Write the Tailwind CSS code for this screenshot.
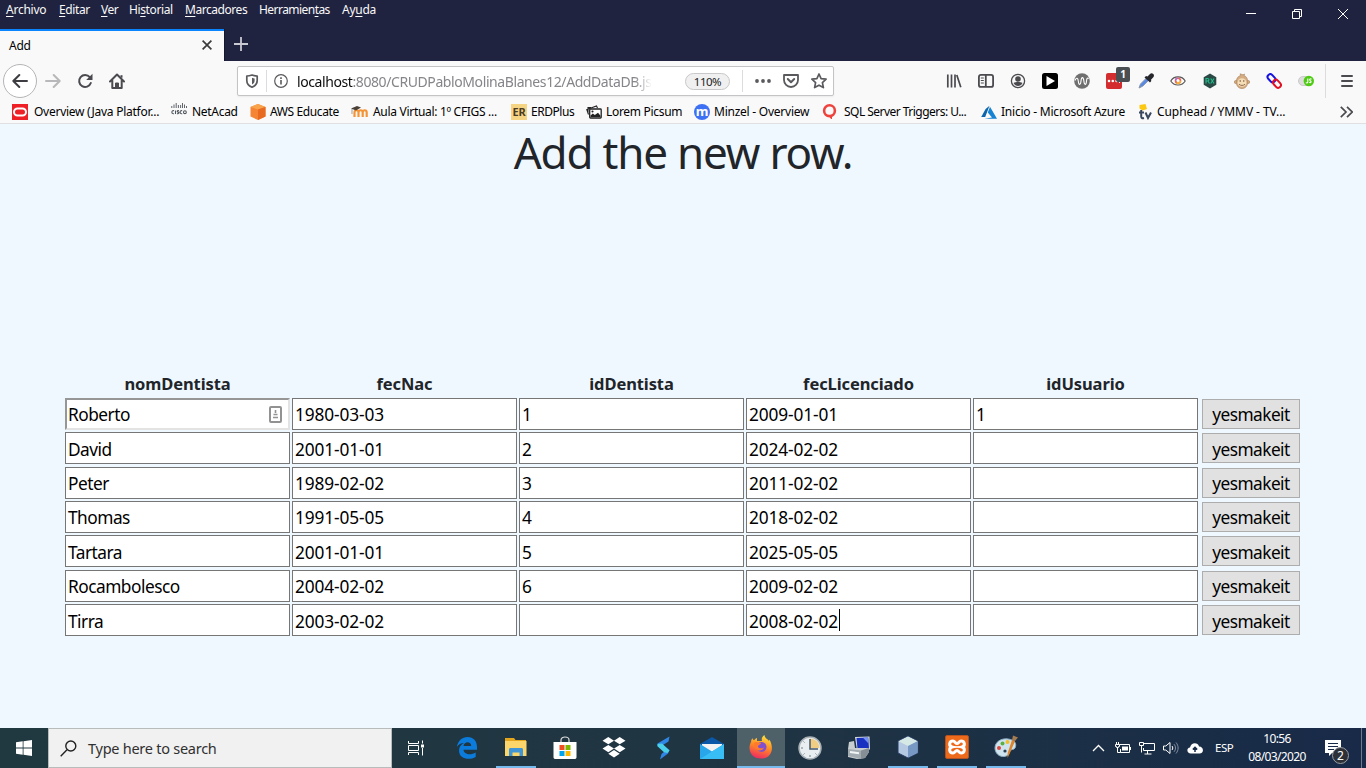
<!DOCTYPE html>
<html lang="es">
<head>
<meta charset="utf-8">
<title>Add</title>
<script src="https://cdn.jsdelivr.net/npm/@tailwindcss/browser@4"></script>
</head>
<body class="w-[1366px] h-[768px] overflow-hidden flex flex-col bg-[#f0f8ff] font-['Noto_Sans','Open_Sans',sans-serif] text-black">

<!-- Title bar -->
<header class="h-[61px] shrink-0 bg-[#20233f] flex justify-between">
  <div class="flex flex-col">
    <nav class="h-[29px] pl-[6px] flex gap-3 text-[12px] leading-[20px] tracking-[-0.25px] text-[#f9f9fa] whitespace-nowrap [&_u]:underline-offset-2">
      <span class="w-[41px]"><u>A</u>rchivo</span><span class="w-[30px] tracking-[-0.4px]"><u>E</u>ditar</span><span class="w-[16px] tracking-[-0.5px]"><u>V</u>er</span><span class="w-[44px] tracking-[-0.38px]">Hi<u>s</u>torial</span><span class="w-[62px] tracking-[-0.45px]"><u>M</u>arcadores</span><span class="w-[71px] tracking-[-0.55px]">Herramien<u>t</u>as</span><span>Ay<u>u</u>da</span>
    </nav>
    <div class="flex h-8">
      <div class="w-[224px] bg-[#f9f9fa] border-t-2 border-[#0a84ff] flex items-center justify-between pl-[9px] pr-[12px] text-[12px] tracking-[-0.25px]">
        <span>Add</span>
        <svg class="size-[10px] -mt-0.5" viewBox="0 0 10 10" stroke="#3c3c3d" stroke-width="1.7" fill="none"><path d="M.6.6l8.800 8.800M9.400.6L.6 9.400"/></svg>
      </div>
      <div class="pl-[8px] border-l border-[#15172c] flex items-center"><svg class="size-4 -mt-0.5" viewBox="0 0 16 16" stroke="#c9c9d4" stroke-width="1.8"><path d="M1 8h14M8 1v14"/></svg></div>
    </div>
  </div>
  <div class="flex gap-[34px] pt-[8px] pr-[17px]">
    <svg class="size-3" viewBox="0 0 12 12" stroke="#fff"><path d="M1 5.500h10"/></svg>
    <svg class="size-3" viewBox="0 0 12 12" stroke="#fff" fill="none"><path d="M1.500 3.500h7v7h-7zM3.500 3.500v-2h7v7h-2"/></svg>
    <svg class="size-3" viewBox="0 0 12 12" stroke="#fff"><path d="M1 1l10 10M11 1L1 11"/></svg>
  </div>
</header>

<!-- Navigation toolbar -->
<div class="h-10 shrink-0 bg-[#f9f9fa] flex items-center pl-[3px] text-[#4a4a4f]">
  <div class="size-[34px] rounded-full border border-[#b5b5b8] bg-white flex items-center justify-center"><svg class="size-4" viewBox="0 0 16 16" fill="none" stroke="#3e3e42" stroke-width="2" stroke-linecap="round" stroke-linejoin="round"><path d="M15 8H1.300M7.300 2L1.300 8l6 6"/></svg></div>
  <svg class="size-4 ml-2" viewBox="0 0 16 16" fill="none" stroke="#b8b8ba" stroke-width="2" stroke-linecap="round" stroke-linejoin="round"><path d="M1 8h13.700M8.700 2l6 6-6 6"/></svg>
  <svg class="size-4 ml-4" viewBox="0 0 16 16" fill="none" stroke="#4a4a4f" stroke-width="2"><path d="M12.800 4.200A6 6 0 1 0 13.800 10" stroke-linecap="round"/><path d="M15.500 .8v6.200H9.200z" fill="#4a4a4f" stroke="none"/></svg>
  <svg class="size-4 ml-4" viewBox="0 0 16 16" fill="none" stroke="#4a4a4f" stroke-width="2" stroke-linejoin="round" stroke-linecap="round"><path d="M1 8.500L8 1.500l7 7M3.300 7.500V15h9.400V7.500"/><path d="M6.500 15v-5h3v5z" fill="#4a4a4f" stroke-width="1"/><path d="M12.500 2.200v2.500" stroke-linecap="butt"/></svg>

  <div class="ml-[112px] w-[597px] h-[30px] border border-[#c4c4c6] rounded-[2px] bg-white flex items-center shadow-[0_1px_2px_rgba(0,0,0,.06)]">
    <svg class="size-[14px] ml-[7px]" viewBox="0 0 14 14" fill="none" stroke="#5a5a5e" stroke-width="1.700"><path d="M7 1C5 1.700 3.500 2 1.800 2v4.500C1.800 10 4 12 7 13.200c3-1.200 5.200-3.200 5.200-6.700V2C10.500 2 9 1.700 7 1z" stroke-linejoin="round"/><path d="M7 3.800c1 .4 1.800.5 2.600.6v2.200C9.600 8.700 8.600 9.700 7 10.500z" fill="#5a5a5e" stroke="none"/></svg>
    <div class="w-px h-[22px] bg-[#dcdcde] ml-[7px]"></div>
    <svg class="size-[14px] ml-[7px]" viewBox="0 0 14 14" fill="none" stroke="#5a5a5e"><circle cx="7" cy="7" r="6.300" stroke-width="1.200"/><path d="M7 6v4.500M7 3.300v1.600" stroke-width="1.600"/></svg>
    <div class="ml-[9px] mt-px w-[355px] overflow-hidden whitespace-nowrap text-[14px] tracking-[-0.41px] text-[#85858a] [mask-image:linear-gradient(to_right,#000_95%,transparent)]"><span class="text-[#0c0c0d]">localhost</span>:8080/CRUDPabloMolinaBlanes12/AddDataDB.jsp</div>
    <div class="ml-[33px] w-[45px] h-[17px] rounded-full border border-[#c8c8ca] bg-[#f0f0f1] text-[11.500px] leading-[15px] text-center tracking-[-0.5px] text-[#222]">110%</div>
    <div class="w-px h-[22px] bg-[#dcdcde] ml-[12px]"></div>
    <svg class="w-4 h-1 ml-3" viewBox="0 0 16 4" fill="#5a5a5e"><circle cx="2" cy="2" r="1.900"/><circle cx="8" cy="2" r="1.900"/><circle cx="14" cy="2" r="1.900"/></svg>
    <svg class="size-4 ml-[12px]" viewBox="0 0 16 16" fill="none" stroke="#5a5a5e" stroke-width="1.800" stroke-linecap="round" stroke-linejoin="round"><path d="M1 2h14v5a7 7 0 0 1-14 0z"/><path d="M4.800 6L8 9.200 11.200 6" stroke-width="2"/></svg>
    <svg class="size-4 ml-[12px]" viewBox="0 0 16 16" fill="none" stroke="#5a5a5e" stroke-width="1.700" stroke-linejoin="round"><path d="M8 1l2.100 4.600 5 .6-3.700 3.400 1 5L8 12.200l-4.400 2.400 1-5L.9 6.200l5-.6z"/></svg>
  </div>

  <div class="ml-[112px] flex gap-4 items-center">
    <svg class="size-4" viewBox="0 0 16 16" stroke="#4a4a4f" stroke-width="1.700"><path d="M1.800 1.500v13M5.500 1.500v13M9 1.500v13M10.800 2l4 12.300"/></svg>
    <svg class="size-4" viewBox="0 0 16 16" fill="none" stroke="#4a4a4f" stroke-width="1.800"><rect x=".9" y="1.900" width="14.200" height="12" rx="2"/><path d="M7.800 2v12"/><path d="M2.800 5h3M2.800 7.500h3M2.800 10h3" stroke-width="1"/></svg>
    <svg class="size-4" viewBox="0 0 16 16"><circle cx="8" cy="8" r="6.600" fill="none" stroke="#4a4a4f" stroke-width="1.300"/><circle cx="8" cy="6" r="2.800" fill="#4a4a4f"/><path d="M3.500 10c2.300-1.200 6.700-1.200 9 0-1 2-2.600 3-4.500 3s-3.500-1-4.500-3z" fill="#4a4a4f"/></svg>
    <svg class="size-4" viewBox="0 0 16 16"><rect width="16" height="16" rx="2.500"/><path d="M4.500 3l8.500 5-8.500 5z" fill="#fff"/></svg>
    <svg class="size-4" viewBox="0 0 16 16"><circle cx="8" cy="8" r="7.800" fill="#6f6f70"/><path d="M1 7.500c1.300-3.500 3-2.500 3.300.5.400 4.500 2.200 4.500 2.700 0 .4-4.500 2.400-4.500 2.900 0 .4 4.500 2.300 4.500 2.600 0 .2-2.500 1-3.500 2.200-2.500" fill="none" stroke="#fff" stroke-width="1.100"/></svg>
    <div class="relative size-4"><svg viewBox="0 0 16 16"><rect width="16" height="16" rx="2" fill="#d32d2f"/><g fill="#fff"><circle cx="3" cy="8" r="1.300"/><circle cx="6.800" cy="8" r="1.300"/><circle cx="10.600" cy="8" r="1.300"/><path d="M13 6h1v4h-1z"/></g></svg><div class="absolute left-[10px] -top-[6px] w-[14px] h-[15px] rounded-[2px] bg-[#4a4f54] text-white text-[10px] leading-[15px] font-bold text-center">1</div></div>
    <svg class="size-4" viewBox="0 0 16 16"><path d="M1 15l1.500-4 6-6 2.200 2.200-6 6z" fill="#5588e8" stroke="#8a96a6" stroke-width="1"/><path d="M6.500 4.500L8 3l1.500.5L12 1c1-1 2.300-.8 3.300 0s.8 2.300 0 3.300L13 6.800 13.300 8 12 9.500z" fill="#25272c"/></svg>
    <svg class="size-4" viewBox="0 0 16 16"><path d="M.8 8c3-5.500 11.400-5.500 14.400 0-3 5.300-11.400 5.300-14.400 0z" fill="#fff" stroke="#555" stroke-width="1.100"/><circle cx="8" cy="7.800" r="3.300" fill="#e9665a"/><path d="M8 7.800V4.500a3.300 3.300 0 0 0-3.200 3z" fill="#b36cc5"/><path d="M8 7.800h3.300A3.300 3.300 0 0 1 6 10.600z" fill="#f3b13e"/><circle cx="8" cy="7.600" r="1.500" fill="#fff"/></svg>
    <svg class="size-4" viewBox="0 0 16 16"><path d="M8 .5l6.300 3.700v7.600L8 15.500l-6.300-3.700V4.200z" fill="#2b4a45"/><path d="M4 10.500v-5h1.500c2 0 2 2.500 0 2.500H4m2 0l1.500 2.500M8.700 5.500l3.300 5m0-5l-3.300 5" stroke="#21bd8b" fill="none" stroke-width="1.100"/></svg>
    <svg class="size-4" viewBox="0 0 16 16"><g fill="#d5ad83" stroke="#aa8057" stroke-width=".6"><circle cx="1.900" cy="9" r="1.600"/><circle cx="14.100" cy="9" r="1.600"/><path d="M2.300 9c0-4 2-6 4.500-6.500L6 .8l3 1 1.500-.8-.3 1.700c2.300.7 3.600 3 3.500 6.300 0 4-2.300 6.500-5.700 6.500S2.300 13 2.300 9z"/></g><ellipse cx="8" cy="9.500" rx="4.400" ry="4.300" fill="#f5ddb8"/><path d="M6.200 7v2M9.800 7v2M5 11.300c2 1.500 4 1.500 6 0" stroke="#8f6c4c" fill="none"/></svg>
    <svg class="size-4" viewBox="0 0 16 16" fill="none" stroke-width="2"><rect x="1" y="2.500" width="9" height="5.500" rx="2.750" transform="rotate(48 5.500 5.200)" stroke="#1512e2"/><rect x="6.500" y="8" width="9" height="5.500" rx="2.750" transform="rotate(48 11 10.700)" stroke="#e30f22"/></svg>
    <svg class="size-4" viewBox="0 0 16 16"><rect x=".5" y="3.500" width="14" height="9" rx="4.500" fill="#ddd" stroke="#bbb" stroke-width=".7"/><circle cx="10.800" cy="8" r="5.200" fill="#50cb14"/><path d="M9.800 5.500V9c0 1.200-1.500 1.200-1.800.3M13.500 6.200c-1.500-.9-2.700.6-1.200 1.500 1.600.9.500 2.500-1.100 1.500" fill="none" stroke="#fff" stroke-width="1.100"/></svg>
  </div>
  <div class="ml-[11px] w-px h-[34px] bg-[#dcdcde]"></div>
  <svg class="size-4 ml-[13px]" viewBox="0 0 16 16" stroke="#4a4a4f" stroke-width="2" stroke-linecap="round"><path d="M3 3h10M3 8h10M3 13h10"/></svg>
</div>

<!-- Bookmarks -->
<div class="h-[23px] shrink-0 bg-[#f9f9fa] border-b border-[#e0e0e2] flex items-center pl-3 pb-px text-[12px] tracking-[-0.3px] whitespace-nowrap">
  <div class="w-[159px] flex items-center gap-[6px]"><svg class="size-4" viewBox="0 0 16 16"><path d="M0 0h16v16H0z" fill="#ee2025"/><rect x="2" y="4.500" width="12" height="7" rx="3.500" fill="none" stroke="#fff" stroke-width="2"/></svg><span class="tracking-[-0.26px]">Overview (Java Platfor...</span></div>
  <div class="w-[79px] flex items-center gap-[5px]"><svg class="size-4 -mt-1" viewBox="0 0 16 16" fill="none" stroke="#4e555a"><path d="M.8 4v2M3 2.500V6M5.200 1v5M7.400 3v3M9.600 3v3M11.500 1v5M13.500 2.500V6M15.500 4v2" stroke-width=".9"/><path d="M3 8.700c-2.800-.8-2.800 3.800 0 3M4.500 8.500V12M8 8.800c-2-.6-2.200.8-1 1.300 1.600.5.800 2-1 1.500M11.200 8.700c-2.800-.8-2.800 3.800 0 3" stroke-width="1.100"/><circle cx="13.900" cy="10.200" r="1.400" stroke-width="1.100"/></svg><span>NetAcad</span></div>
  <div class="w-[101px] flex items-center gap-1"><svg class="size-4" viewBox="0 0 16 16"><path d="M8 0l7.500 3v9.500L8 16 .5 12.500V3z" fill="#f58534"/><path d="M8 5.500L.5 3 8 0l7.500 3z" fill="#f9a34b"/><path d="M8 5.500L15.500 3v9.500L8 16z" fill="#e86a20"/></svg><span class="tracking-[-0.38px]">AWS Educate</span></div>
  <div class="w-[160px] flex items-center gap-[5px]"><svg class="w-[17px] h-4" viewBox="0 0 17 16" fill="none"><path d="M3.500 13V8.500c0-3 4-3 4 0V13m0-4.500c0-3 4.200-3 4.200 0V13m0-4.500c0-3 4-3 4 0V13" stroke="#f59435" stroke-width="2.200"/><path d="M0 4.500L6 2l4 1.500-5 3z" fill="#4a4038"/><path d="M1 5v5" stroke="#777" stroke-width=".7"/></svg><span>Aula Virtual: 1º CFIGS ...</span></div>
  <div class="w-[75px] flex items-center gap-1"><span class="size-4 bg-[#f5d583] text-[#4b3b25] font-bold text-[11px] leading-4 tracking-[-0.3px] text-center">ER</span><span class="tracking-[-0.45px]">ERDPlus</span></div>
  <div class="w-[108px] flex items-center gap-1"><svg class="size-4" viewBox="0 0 16 16" fill="none" stroke="#222" stroke-width="1.100"><path d="M2.500 10.500L.8 5.500 10.500 2l1 2M2 10V3.500h3"/><rect x="3.700" y="5" width="11.500" height="9" rx=".8" fill="#fff" stroke-width="1.300"/><path d="M4.500 13V11.500l2.300-2 2 1.500L12 8.800l2.500 3V13z" fill="#222" stroke="none"/><circle cx="6.500" cy="7.500" r=".5"/></svg><span>Lorem Picsum</span></div>
  <div class="w-[128px] flex items-center gap-1"><span class="size-4 rounded-full bg-[#3e70f4] text-white font-bold text-[13px] leading-[14px] text-center tracking-[-0.3px]">m</span><span class="tracking-[-0.24px]">Minzel - Overview</span></div>
  <div class="w-[159px] flex items-center gap-[7px]"><svg class="size-[15px]" viewBox="0 0 15 15" fill="none" stroke="#ee433c"><circle cx="7.500" cy="6.700" r="5.400" stroke-width="2.600"/><path d="M7.500 12l2 3V11z" fill="#ee433c" stroke-width="1"/></svg><span class="tracking-[-0.53px]">SQL Server Triggers: U...</span></div>
  <div class="w-[157px] flex items-center gap-1"><svg class="size-4" viewBox="0 0 16 16"><path d="M8.500 1.700L4.600 5 .2 13h4z" fill="#0d65ac"/><path d="M9 2.800L6.800 8.600 11 13.500 3.500 14.700H16z" fill="#1683d3"/></svg><span class="tracking-[-0.22px]">Inicio - Microsoft Azure</span></div>
  <div class="w-[202px] flex items-center gap-[3px]"><svg class="size-4" viewBox="0 0 16 16" fill="none"><path d="M1.500 1l6-1 1.500 5-4.500 1.500-3-2z" fill="#fbc913"/><path d="M3.200 6v6.500c0 1.500 1 2 2.800 1.500M1 8.500h5M7.500 8.500L10 14l3-5.500" stroke="#39485f" stroke-width="2"/></svg><span class="tracking-[-0.08px]">Cuphead / YMMV - TV...</span></div>
  <svg class="w-[13px] h-3" viewBox="0 0 13 12" fill="none" stroke="#4a4a4f" stroke-width="1.700"><path d="M.8 .8L6 6 .8 11.200M7 .8L12.200 6 7 11.200"/></svg>
</div>

<!-- Page -->
<main class="grow flex flex-col items-center">
  <h1 class="text-[44px] leading-[53px] h-[250px] pt-[2px] tracking-[-1.2px] text-[#212529]">Add the new row.</h1>
  <div class="w-[1236px] text-[17.300px] leading-[30px]">
    <div class="flex gap-[2px] h-6 leading-[20px] font-bold text-[16.500px] text-center text-[#212529] [&>span]:w-[225px] tracking-[-0.1px]"><span>nomDentista</span><span>fecNac</span><span>idDentista</span><span>fecLicenciado</span><span>idUsuario</span></div>
    <div id="rows"></div>
  </div>
</main>

<!-- Taskbar -->
<footer class="h-10 shrink-0 bg-linear-to-r from-[#203840] via-[#203542] to-[#182a48] flex text-white">
  <div class="w-12 flex items-center justify-center"><svg class="size-4" viewBox="0 0 16 16" fill="#fff"><path d="M0 2.200l6.700-.9v6.200H0zM7.500 1.200L16 0v7.500H7.500zM0 8.400h6.700v6.300L0 13.800zM7.500 8.400H16V16l-8.500-1.200z"/></svg></div>
  <div class="w-[344px] bg-[#f1f1f1] border border-[#b9bcbd] flex items-center pl-[11px]">
    <svg class="size-[17px]" viewBox="0 0 17 17" fill="none" stroke="#222" stroke-width="1.400"><circle cx="10.800" cy="6" r="5"/><path d="M7 9.800L.7 16.200"/></svg>
    <span class="ml-[11px] mt-px text-[14.500px] tracking-[-0.26px] text-[#303030]">Type here to search</span>
  </div>
  <div class="w-12 mr-[3px] flex items-center justify-center"><svg class="size-4" viewBox="0 0 16 16" fill="none" stroke="#fff"><path d="M.5 1v2.500h10V1M.5 15v-2.500h10V15M.5 5.500h10v5H.5zM14.500 .5v3M14.500 8v7.500"/><path d="M13 4.500h3v3h-3z" fill="#fff" stroke="none"/></svg></div>
  <div class="flex gap-px [&>div]:h-10 [&>div]:flex [&>div]:items-center [&>div]:justify-center [&_svg]:size-6">
    <div class="w-12"><svg viewBox="0 0 24 24"><path d="M1.800 11C3 4.500 7.300 1 12.500 1c6 0 9.500 4.300 9.500 10v2.800H8.500c.4 5 7.500 5.600 12.200 2.700V21C14 24.700 4 23 4 14.500c0-3.500 2-6.200 5-7.500C6 7 3.500 8.500 1.800 11zM8.500 10h7.700c0-5-7-4.700-7.700 0z" fill="#0b7bdc"/></svg></div>
    <div class="w-10 mx-1 border-b-2 border-[#76b9ed]"><svg viewBox="0 0 24 24"><path d="M1 3h9l1.500 2H22v16H1z" fill="#e5a51d"/><path d="M1 6h21.500v15H1z" fill="#fcd66b"/><path d="M5 21v-6.500c0-1 .7-1.500 1.500-1.500h11c.8 0 1.500.5 1.500 1.500V21h-3.500v-3.500h-7V21z" fill="#3f95d5"/></svg></div>
    <div class="w-12"><svg viewBox="0 0 24 24"><path d="M8 7V4c0-4 8-4 8 0v3" fill="none" stroke="#ddd" stroke-width="1.200"/><path d="M.5 6h23v15c0 1.500-.8 2-2 2h-19c-1.200 0-2-.5-2-2z" fill="#fff"/><path d="M6.500 9h5v5h-5z" fill="#f14f21"/><path d="M12.500 9h5v5h-5z" fill="#7eb900"/><path d="M6.500 15h5v5h-5z" fill="#00a3ee"/><path d="M12.500 15h5v5h-5z" fill="#feb800"/></svg></div>
    <div class="w-12"><svg viewBox="0 0 24 24" fill="#fff"><path d="M6.300 1L12 4.700 6.300 8.300.5 4.700zM17.700 1l5.800 3.700-5.800 3.600L12 4.700zM6.300 9L12 12.600l-5.700 3.700L.5 12.600zM17.700 9l5.800 3.600-5.800 3.700L12 12.600zM12 14l5.700 3.800L12 21.500l-5.700-3.700z"/></svg></div>
    <div class="w-12"><svg viewBox="0 0 24 24"><path d="M18.500.5l-1 5L12 9l6.500 5-1.500 3.500-8 6 1.500-5.500 3-2.500L6.500 10V7.500z" fill="#2e86e6"/><path d="M6.500 8l4.500-.5 7.500 7-2 2.500-3.500-.8-6.500-6z" fill="#4bd0ea"/></svg></div>
    <div class="w-12"><svg viewBox="0 0 24 24"><path d="M0 8L12 1l12 7v3H0z" fill="#0b58a8"/><path d="M2 8h20v8H2z" fill="#f3f3f3"/><path d="M0 8l12 7.500L24 8v15H0z" fill="#29a5e9"/><path d="M24 8L0 23h24z" fill="#38bdf4"/></svg></div>
    <div class="w-12 bg-[#4e6068] border-b-2 border-[#76b9ed]"><svg viewBox="0 0 24 24"><defs><linearGradient id="f" x1=".7" y1="0" x2=".4" y2="1"><stop stop-color="#ffe63d"/><stop offset=".5" stop-color="#ff8a25"/><stop offset="1" stop-color="#f02b62"/></linearGradient></defs><path d="M2 7c0-2 1-3 1.500-3.700.3 1 .8 1.600 1.500 2C6 4 7 3 8 3v3h5c-1-3 1-5 2.500-6 .2 3.500 3 3.500 4.500 6 .2-.7.200-1 .2-1.500C25 11 24 23.500 12 23.500 1 23.500-1.500 13 2 7z" fill="url(#f)"/><circle cx="12.500" cy="12" r="5" fill="#8050cf"/><path d="M5 8c3-2 5 0 7 0-.5 2-3 2-3 3.500 0 2 4 2.500 6 1-2 5-10 4-10-4.500z" fill="#ff7a2a"/></svg></div>
    <div class="w-12"><svg viewBox="0 0 24 24"><circle cx="12" cy="12" r="11" fill="#e9eef1" stroke="#a7b0b5" stroke-width="1.500"/><path d="M12 12V2.500A9.500 9.500 0 0 1 21.500 12z" fill="#f1cd83"/><path d="M12 3v10h8" stroke="#44586a" stroke-width="1.500" fill="none"/><path d="M3 12h2M12 19v2M5.500 5.500l1 1M5.500 18.500l1-1M18.500 18.500l-1-1" stroke="#728089"/></svg></div>
    <div class="w-12"><svg viewBox="0 0 24 24"><path d="M8 1l14.500-.5.500 13-13 1z" fill="#d4d9dc"/><path d="M9.500 2L21.200 1.500l.8 11-11.500.5z" fill="#1831c0"/><path d="M16 1.700l5-.2.500 6z" fill="#7392f3"/><path d="M2 6l5-1 1 7h14v4l-4 6-8 1-9-2v-8z" fill="#c9ced1"/><path d="M1 13l13 1.500V23L1 20z" fill="#a3acb1"/><path d="M14 14.500l8-2.500v4l-4 6-4 1z" fill="#868f95"/><path d="M3 16l9 1.300" stroke="#f2f5f6" stroke-width="2"/></svg></div>
    <div class="w-10 mx-1 border-b-2 border-[#76b9ed]"><svg viewBox="0 0 24 24"><path d="M12 1l10 5v12l-10 5-10-5V6z" fill="#b5cae2" stroke="#263b62"/><path d="M12 1.500l9.500 4.700L12 11 2.500 6.200z" fill="#d7e9e5"/><path d="M12 11l9.500-4.800V18L12 22.500z" fill="#7698c3"/></svg></div>
    <div class="w-10 mx-1 border-b-2 border-[#76b9ed]"><svg viewBox="0 0 24 24"><rect x=".5" y=".5" width="23" height="23" rx="1.500" fill="#ed6a1b" stroke="#b35220"/><path d="M7 12C3.500 11 4 6 8 6c2 0 2.500 2.500 4 2.500S14 6 16 6c4 0 4.500 5 1 6 3.500 1 3 6-1 6-2 0-2.500-2.500-4-2.500S10 18 8 18c-4 0-4.500-5-1-6z" fill="none" stroke="#fff" stroke-width="3"/><path d="M9 12h6" stroke="#fff" stroke-width="1.500"/></svg></div>
    <div class="w-10 mx-1 border-b-2 border-[#76b9ed]"><svg viewBox="0 0 24 24"><path d="M1 13C1 7 7 3 14 4c7 .8 9 5 7 9-1 2-4 1-5 3s-1 5-6 5.500C5 22 1 18 1 13z" fill="#cfe4ef" stroke="#8fb0c4"/><circle cx="5" cy="13" r="2" fill="#d74740"/><circle cx="8.500" cy="8.500" r="2" fill="#5eaf40"/><circle cx="13.500" cy="7" r="2" fill="#f2bd2c"/><circle cx="11" cy="16" r="1.600" fill="#28404f"/><path d="M21 6l-5.500 13-2 4 .2-5L18 5z" fill="#dc852c"/><path d="M18 5l1-4.500 5 2L21 6z" fill="#a57b52"/></svg></div>
  </div>
  <div class="ml-auto w-[275px] flex items-center">
    <svg class="w-[13px] h-3 ml-[1px]" viewBox="0 0 13 12" fill="none" stroke="#fff" stroke-width="1.300"><path d="M1 9l5.500-5.500L12 9"/></svg>
    <svg class="size-4 ml-[10px]" viewBox="0 0 16 16" fill="none" stroke="#fff"><path d="M4.500 4.500h10v8h-9V9"/><path d="M7 6.500h6v4H7zM15 7h1v3h-1z" fill="#fff" stroke="none"/><path d="M1.500 2v2M3.500 2v2M.5 4.500h4v2h-1v1h-2v-1h-1zM2.500 7.500v5h3"/></svg>
    <svg class="size-4 ml-2" viewBox="0 0 16 16" fill="none" stroke="#fff"><path d="M5 3.500h10.500v7h-11V8M.5 2.500h4v3h-4zM2.500 5.500v7M8.500 11v3M5.500 14h7"/></svg>
    <svg class="size-4 ml-2" viewBox="0 0 16 16" fill="none" stroke="#fff"><path d="M.5 6v4h2.300L7 13.500v-11L2.800 6z"/><path d="M9 6c1 1.200 1 2.800 0 4"/><path d="M11 4.200c2 2.300 2 5.300 0 7.600M13 2.500c2.800 3.300 2.800 7.700 0 11" stroke="#8390a2"/></svg>
    <svg class="size-4 ml-[8px]" viewBox="0 0 16 16"><path d="M4 13.500C-.5 13.500-.8 8 3 7.500 4 2 11 2 12 6.500c5 0 5.300 7 .5 7z" fill="#fff"/><path d="M8 12V7.500M5.800 9.500L8 7.300l2.200 2.200" fill="none" stroke="#182a48" stroke-width="1.500"/></svg>
    <span class="ml-[12px] w-[19px] text-[11.500px] tracking-[-0.5px]">ESP</span>
    <div class="ml-[13px] w-[60px] text-center text-[12px] leading-[18px] tracking-[-0.65px] whitespace-nowrap"><div>10:56</div><div>08/03/2020</div></div>
    <div class="relative ml-[18px] w-4 h-4"><svg class="size-4" viewBox="0 0 16 16"><path d="M0 0h16v13H7l-3 3v-3H0z" fill="#fff"/><path d="M3 3.500h10M3 6.500h10M3 9.500h6" stroke="#182a48"/></svg><div class="absolute left-[7px] top-[7px] size-[17px] rounded-full bg-[#2d3036] border border-[#9a9da2] text-[12px] leading-[15px] text-center">2</div></div>
    <div class="ml-auto mr-[4px] w-px h-10 bg-[#6f7a8c]"></div>
  </div>
</footer>

<script>
const data = [
  ["Roberto","1980-03-03","1","2009-01-01","1"],
  ["David","2001-01-01","2","2024-02-02",""],
  ["Peter","1989-02-02","3","2011-02-02",""],
  ["Thomas","1991-05-05","4","2018-02-02",""],
  ["Tartara","2001-01-01","5","2025-05-05",""],
  ["Rocambolesco","2004-02-02","6","2009-02-02",""],
  ["Tirra","2003-02-02","","2008-02-02",""]
];
const badge = '<svg class="w-[13px] h-[17px] mr-[6px]" viewBox="0 0 13 17" fill="none" stroke="#929292"><rect x="1" y="1" width="11" height="15" rx="1" stroke-width="2"/><path d="M6.500 4v3M4.500 8.500h4M4 11.500h5" stroke-width="1.600"/></svg>';
document.getElementById("rows").innerHTML = data.map((r, i) => {
  const tall = i === 1 || i === 4;
  const low = tall || i === 6;
  const cells = r.map((v, j) => {
    const first = i === 0 && j === 0;
    const edge = first ? "border-2 border-t-[#969696] border-l-[#969696] border-b-[#e3e3e3] border-r-[#e3e3e3] pl-px" : "border border-[#767676] pl-[2px]";
    const caret = i === 6 && j === 3 ? '<i class="w-px h-[22px] bg-black ml-px"></i>' : "";
    return `<div class="w-[225px] h-8 bg-white flex items-center ${edge}"><span class="${low ? "pt-1" : "pt-0.5"} ${j ? "tracking-[-0.12px]" : "tracking-[-0.5px]"}">${v}</span>${caret}${first ? '<b class="ml-auto">' + badge + "</b>" : ""}</div>`;
  }).join("");
  return `<div class="flex gap-[2px] ${tall ? "h-[35px]" : "h-[34px]"}">${cells}<button class="ml-[2px] mt-px w-[98px] h-[30px] bg-[#e1e1e1] border border-[#adadad] leading-[26px] tracking-[-0.55px] ${low ? "pt-[3px]" : "pt-0.5"}">yesmakeit</button></div>`;
}).join("");
</script>
</body>
</html>
